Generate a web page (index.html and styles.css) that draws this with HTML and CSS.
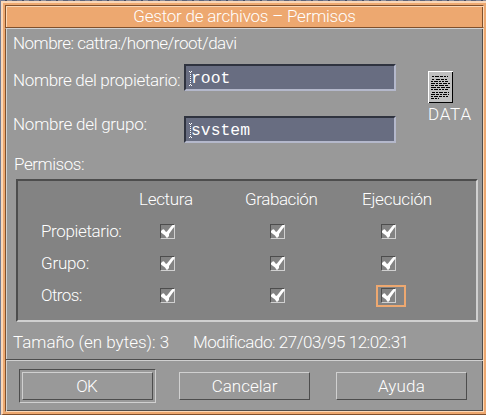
FILE: index.html
```
<!DOCTYPE html>
<html lang="es">
<head>
<meta charset="utf-8">
<title>Gestor de archivos – Permisos</title>
<link rel="stylesheet" href="styles.css">
</head>
<body>
<svg class="defs" aria-hidden="true">
  <symbol id="check" viewBox="0 0 15 15"><path d="M1 7L3 5.2L4 5.5L6 8L7 7.5L11 2.5L12.5 1H14.5V2.5L12.5 5L9 10V12L7.5 13.7H6.5L5 11.5L1 8.5Z" fill="#fff"/></symbol>
</svg>
<div class="window">
  <div class="frame">
    <header class="titlebar"><span class="t-title">Gestor de archivos – Permisos</span></header>
    <main class="pane">
      <div class="path"><span class="t-path">Nombre: cattra:/home/root/davi</span></div>
      <div class="identity">
        <div class="fields">
          <div class="field-row"><label class="t-owner">Nombre del propietario:</label>
            <div class="field"><svg class="caret" width="3" height="15"><path d="M0 .5h1M2 .5h1M0 14.5h1M2 14.5h1" stroke="#fff"/><path d="M1.5 1v13" stroke="#fff" stroke-dasharray="1 1"/></svg><span class="value">root</span></div></div>
          <div class="field-row"><label class="t-group">Nombre del grupo:</label>
            <div class="field"><svg class="caret" width="3" height="15"><path d="M0 .5h1M2 .5h1M0 14.5h1M2 14.5h1" stroke="#fff"/><path d="M1.5 1v13" stroke="#fff" stroke-dasharray="1 1"/></svg><span class="value">svstem</span></div></div>
        </div>
        <div class="file">
          <svg width="25" height="32" shape-rendering="crispEdges">
            <path d="M0 0h25v32H0z" fill="#000"/><path d="M0 0h25v1H1v31H0z" fill="#fff"/><path d="M1 1h23v30H1z" fill="#c0c0c0"/>
            <g stroke="#000" fill="none">
              <path d="M4 5.5h16" stroke-dasharray="2 1 4 1 3 1"/>
              <path d="M4 8.5h17" stroke-dasharray="2 2 4 1 3 1"/>
              <path d="M3 10.5h17" stroke-dasharray="2 1 4 1 2 1"/>
              <path d="M3 12.5h19" stroke-dasharray="4 1 2 1 3 1"/>
              <path d="M3 14.5h18" stroke-dasharray="3 1 3 1 5 1"/>
              <path d="M3 16.5h19" stroke-dasharray="5 1 3 1 4 1"/>
              <path d="M3 18.5h17" stroke-dasharray="2 1 4 1 2 1"/>
              <path d="M4 21.5h17" stroke-dasharray="3 1 2 1 4 1"/>
              <path d="M3 23.5h18" stroke-dasharray="4 1 3 1 2 1"/>
              <path d="M3 25.5h17" stroke-dasharray="2 1 4 1 3 1"/>
              <path d="M3 27.5h8" stroke-dasharray="3 1 2 1"/>
            </g>
          </svg>
          <span class="t-data">DATA</span>
        </div>
      </div>
      <div class="section"><span class="t-perm">Permisos:</span></div>
      <div class="grid">
        <span></span><span class="t-read">Lectura</span><span class="t-write">Grabación</span><span class="t-exec">Ejecución</span>
        <span class="name t-prop">Propietario:</span><i class="box"><svg><use href="#check"/></svg></i><i class="box"><svg><use href="#check"/></svg></i><i class="box"><svg><use href="#check"/></svg></i>
        <span class="name t-grp">Grupo:</span><i class="box"><svg><use href="#check"/></svg></i><i class="box"><svg><use href="#check"/></svg></i><i class="box"><svg><use href="#check"/></svg></i>
        <span class="name t-oth">Otros:</span><i class="box"><svg><use href="#check"/></svg></i><i class="box"><svg><use href="#check"/></svg></i><i class="box focused"><svg><use href="#check"/></svg></i>
      </div>
      <div class="info"><span class="t-size">Tamaño (en bytes): 3</span><span class="t-mod">Modificado: 27/03/95 12:02:31</span></div>
      <footer class="actions">
        <div class="default"><button class="btn"><span class="t-ok">OK</span></button></div>
        <button class="btn"><span class="t-cancel">Cancelar</span></button>
        <button class="btn"><span class="t-help">Ayuda</span></button>
      </footer>
    </main>
  </div>
</div>
</body>
</html>
```
FILE: styles.css
```
*, ::before, ::after { box-sizing: border-box; }
html, body { height: 100%; }
body {
  margin: 0; padding: 1px 0 0 1px; overflow: hidden;
  background: repeating-linear-gradient(90deg, #777c91 0 5px, #454b60 5px 7px, #8c8c98 7px 12px, #5d6378 12px 17px);
  font: 300 17px/20px Roboto, "Liberation Sans", sans-serif; color: #fff;
}
span, label { white-space: nowrap; }
.defs { position: absolute; width: 0; height: 0; }
.window { height: 414px; border: solid #fbd8b8; border-width: 2px 0 0 2px; border-bottom: 1px solid #80502c; }
.frame {
  height: 411px; background: #eda870; padding: 2px;
  display: flex; flex-direction: column;
}
.titlebar {
  height: 23px; flex: none; border: 1px solid #80502c; border-right-color: #fbd8b8;
  box-shadow: inset 1px 1px #fbd8b8, inset -1px 0 #80502c; text-align: center;
}
.pane {
  height: 384px; flex: none; background: #999; border: 1px solid; border-color: #d0d0d0 #fbd8b8 #fbd8b8 #80502c;
  box-shadow: inset 1px 0 #d0d0d0, inset -1px -1px #4d4d4d;
  display: flex; flex-direction: column; padding: 0 1px 1px 1px;
}
.path { height: 35px; padding: 4px 0 0 6px; }
.identity { display: flex; height: 88px; }
.fields { width: 421px; display: flex; flex-direction: column; gap: 25px; }
.field-row { display: flex; height: 27px; padding-left: 6px; }
.field-row label { width: 171px; padding-top: 6px; }
.field-row + .field-row label { padding-top: 0; margin-top: -2px; }
.field {
  width: 212px; height: 27px; background: #686d81; border: 2px solid;
  border-color: #2f333f #b4b8cb #b4b8cb #2f333f; display: flex; padding: 5px 0 0 3px;
}
.caret { flex: none; }
.value { font: 16.4px/20px "Liberation Mono", monospace; margin: -2px 0 0 -1px; }
.file { padding-top: 7px; display: flex; flex-direction: column; }
.file span { margin-top: 1px; }
.section { height: 27px; padding: 2px 0 0 7px; }
.grid {
  width: 462px; height: 143px; margin-left: 9px; background: #838383; border: 2px solid;
  border-color: #4d4d4d #d0d0d0 #d0d0d0 #4d4d4d;
  display: grid; grid-template-columns: 121px 106px 117px 1fr; grid-template-rows: 32px 32px 32px 32px; padding-top: 8px;
}
.name { padding-left: 23px; }
.box {
  width: 15px; height: 15px; margin: 3px 0 0 21px; border: 1px solid; position: relative;
  border-color: #4d4d4d #d0d0d0 #d0d0d0 #4d4d4d;
}
.box:nth-child(4n+3) { margin-left: 25px; }
.box:nth-child(4n) { margin-left: 19px; }
.box svg { display: block; width: 15px; height: 15px; margin: -1px; }
.focused::after { content: ""; position: absolute; left: -6px; top: -4px; width: 30px; height: 22px; border: 2px solid #eda870; }
.info { height: 37px; padding: 10px 0 0 6px; display: flex; }
.t-size { width: 180px; }
.actions {
  margin: 0 -1px; height: 51px; border-top: 1px solid #4d4d4d; box-shadow: inset 0 1px #d0d0d0;
  padding: 9px 0 0 13px; display: flex;
}
.default { flex: none; width: 137px; height: 34px; padding: 2px; border: 1px solid; border-color: #4d4d4d #d0d0d0 #d0d0d0 #4d4d4d; margin-right: 23px; }
.btn {
  flex: none; width: 131px; height: 28px; padding: 0; background: none; font: inherit; color: inherit; text-align: center;
  border: 1px solid; border-color: #d0d0d0 #4d4d4d #4d4d4d #d0d0d0;
}
.default .btn { padding-right: 2px; }
.actions > .btn { margin-top: 3px; }
.actions > .btn + .btn { margin-left: 26px; }

/* tracking per caption */
.t-title { letter-spacing: -.22px; }
.t-path { letter-spacing: -.5px; }
.t-owner { letter-spacing: -.32px; }
.t-group { letter-spacing: -.24px; }
.t-perm { letter-spacing: -.45px; }
.t-data { letter-spacing: .8px; }
.t-read { letter-spacing: -.3px; }
.t-write { letter-spacing: -.42px; }
.t-exec { letter-spacing: -.22px; }
.t-prop { letter-spacing: -.36px; }
.t-grp { letter-spacing: -.2px; }
.t-oth { letter-spacing: -.6px; }
.t-mod { letter-spacing: -.48px; }
.t-ok { letter-spacing: -.8px; }
.t-help { letter-spacing: .2px; }
```
